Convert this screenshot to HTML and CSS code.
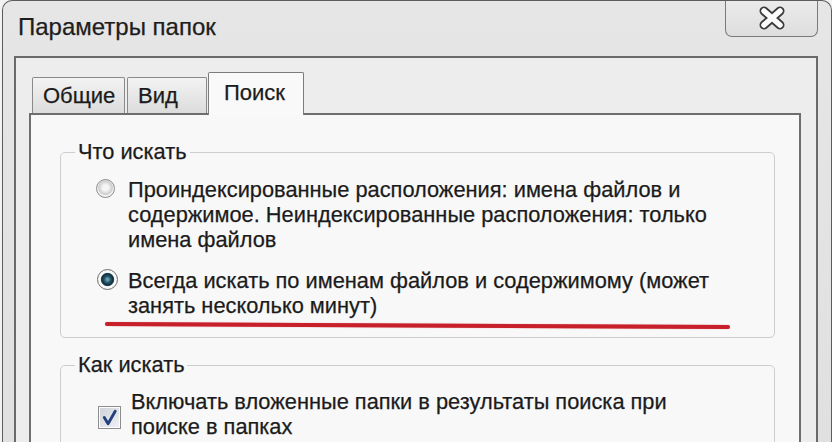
FILE: index.html
```html
<!DOCTYPE html>
<html lang="ru">
<head>
<meta charset="utf-8">
<title>Параметры папок</title>
<link rel="stylesheet" href="styles.css">
</head>
<body>
<div class="window">
  <div class="titlebar">
    <span class="title">Параметры папок</span>
    <div class="close">
      <svg width="28" height="24" viewBox="0 0 28 24">
        <path d="M6 5 L22 19 M22 5 L6 19" stroke="#3a3a3a" stroke-width="9" stroke-linecap="round" fill="none"/>
        <path d="M6 5 L22 19 M22 5 L6 19" stroke="#fafafa" stroke-width="5.5" stroke-linecap="round" fill="none"/>
      </svg>
    </div>
  </div>
  <div class="frame">
    <div class="tabs">
      <div class="tab tab-general">Общие</div>
      <div class="tab tab-view">Вид</div>
      <div class="tab tab-search active">Поиск</div>
    </div>
    <div class="panel">
      <fieldset class="group group-what">
        <legend>Что искать</legend>
        <div class="option option-first">
          <span class="radio"></span>
          <span class="label">Проиндексированные расположения: имена файлов и<br>содержимое. Неиндексированные расположения: только<br>имена файлов</span>
        </div>
        <div class="option option-second">
          <span class="radio checked"></span>
          <span class="label">Всегда искать по именам файлов и содержимому (может<br>занять несколько минут)</span>
        </div>
      </fieldset>
      <fieldset class="group group-how">
        <legend>Как искать</legend>
        <div class="option option-check">
          <span class="checkbox">
            <svg width="19" height="19" viewBox="0 0 20 20">
              <path d="M4.5 10 L8.5 16.5 L16 3.5" stroke="#23407e" stroke-width="3" stroke-linejoin="round" stroke-linecap="round" fill="none"/>
            </svg>
          </span>
          <span class="label">Включать вложенные папки в результаты поиска при<br>поиске в папках</span>
        </div>
      </fieldset>
      <span class="red-mark"></span>
    </div>
  </div>
</div>
</body>
</html>
```
FILE: styles.css
```css
html, body {
  margin: 0;
  padding: 0;
}
body {
  width: 832px;
  height: 442px;
  overflow: hidden;
  background: #f2f2f2;
  font-family: "Liberation Sans", Arial, sans-serif;
  color: #1b1b1b;
  -webkit-text-stroke: 0.25px #1b1b1b;
}
.window {
  margin-left: 2px;
  width: 828px;
  height: 441px;
  overflow: hidden;
  border: 1px solid #5c5c5c;
  border-bottom: none;
  border-radius: 10px 10px 0 0;
  background: linear-gradient(#e6e6e6, #e0e0e0);
}
.titlebar {
  height: 55px;
  display: flex;
  align-items: flex-start;
  justify-content: space-between;
  padding-left: 15px;
}
.title {
  font-size: 24px;
  line-height: 28px;
  margin-top: 12px;
  color: #1e1e1e;
}
.close {
  margin-top: -1px;
  margin-right: 13px;
  width: 91px;
  height: 36px;
  border: 1px solid #7a7a7a;
  border-top: none;
  border-radius: 0 0 7px 7px;
  background: linear-gradient(#ebebeb, #dedede);
  display: flex;
  align-items: center;
  justify-content: center;
}
.frame {
  margin: 0 13px 0 11px;
  height: 370px;
  border: 2px solid #6a6a6a;
  border-bottom: none;
  background: #ededed;
  padding: 14px 15px 0 13px;
}
.tabs {
  display: flex;
  align-items: flex-end;
  height: 41px;
  padding-left: 3px;
  font-size: 22px;
}
.tab {
  box-sizing: border-box;
  height: 36px;
  border: 1px solid #8a8a8a;
  border-bottom: none;
  border-radius: 2px 2px 0 0;
  background: linear-gradient(#f3f3f3, #dcdcdc);
  padding: 5px 0 0 10px;
  line-height: 26px;
}
.tab-general {
  width: 93px;
}
.tab-view {
  width: 80px;
  margin-left: 2px;
}
.tab-search {
  width: 96px;
}
.tab.active {
  position: relative;
  z-index: 1;
  height: 43px;
  margin-bottom: -2px;
  margin-left: 1px;
  padding-left: 15px;
  padding-top: 7px;
  background: #f9f9f9;
  border-color: #7c7c7c;
}
.panel {
  position: relative;
  height: 327px;
  overflow: hidden;
  border: 2px solid #6e6e6e;
  border-bottom: none;
  background: #f8f8f8;
}
.group {
  margin: 25px 24px 0 29px;
  padding: 0 0 19px 0;
  border: 1px solid #cdcdcd;
  border-radius: 5px;
  font-size: 21.8px;
  line-height: 25px;
}
.group legend {
  margin-left: 14px;
  padding: 0 3px;
  line-height: 24px;
}
.group-how {
  margin-top: 15px;
  padding-bottom: 15px;
}
.option {
  display: flex;
  align-items: flex-start;
  padding-left: 35px;
  white-space: nowrap;
}
.option-first {
  margin-top: 13px;
}
.option-second {
  margin-top: 16px;
}
.option-check {
  margin-top: 12px;
}
.label {
  margin-left: 13px;
}
.radio {
  flex: none;
  box-sizing: border-box;
  width: 19px;
  height: 19px;
  margin-top: 2px;
  border-radius: 50%;
  border: 1px solid #8c8c8c;
  background: radial-gradient(circle at 50% 45%, #f6f6f6 0 22%, #d4d4d4 48%, #cfcfcf 55%, #f2f2f2 62%, #e4e4e4 100%);
}
.radio.checked {
  width: 21px;
  height: 21px;
  margin-top: 1px;
  margin-left: 1px;
  margin-right: -3px;
  border-color: #6f6f6f;
  background: radial-gradient(circle at 50% 50%, #6a9aab 0 8%, #2a5d72 22%, #10303e 40%, #1f4252 46%, #fbfbfb 53%, #f3f3f3 75%, #d8d8d8 100%);
}
.checkbox {
  flex: none;
  box-sizing: border-box;
  width: 23px;
  height: 23px;
  margin-top: 17px;
  margin-left: 2px;
  margin-right: -3px;
  border: 1px solid #8d8d8d;
  padding: 1px;
  background: #fdfdfd;
  display: flex;
}
.checkbox svg {
  background: linear-gradient(135deg, #cfd3da, #eef0f4);
}
.red-mark {
  position: absolute;
  left: 74px;
  top: 207px;
  width: 625px;
  height: 4px;
  border-radius: 2px;
  background: #c8202b;
  box-shadow: 0 0 1px rgba(200, 32, 43, 0.6);
  transform: rotate(0.27deg);
  transform-origin: left center;
}
```
